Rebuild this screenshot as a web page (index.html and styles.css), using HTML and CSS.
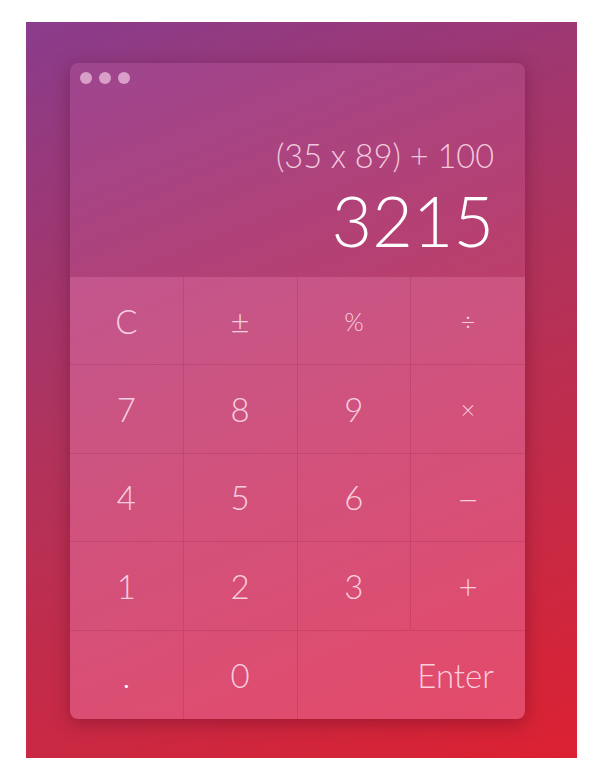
FILE: index.html
```html
<!DOCTYPE html>
<html>
<head>
<meta charset="utf-8">
<link rel="stylesheet" href="styles.css">
</head>
<body>
<div class="backdrop">
  <div class="calc">
    <div class="display">
      <div class="dots"><span></span><span></span><span></span></div>
      <div class="expr">(35 x 89) + 100</div>
      <div class="result">3215</div>
    </div>
    <div class="keys">
      <div class="key">C</div>
      <div class="key">±</div>
      <div class="key small">%</div>
      <div class="key small">÷</div>
      <div class="key">7</div>
      <div class="key">8</div>
      <div class="key">9</div>
      <div class="key small">×</div>
      <div class="key">4</div>
      <div class="key">5</div>
      <div class="key">6</div>
      <div class="key minus">–</div>
      <div class="key">1</div>
      <div class="key">2</div>
      <div class="key">3</div>
      <div class="key">+</div>
      <div class="key dot">.</div>
      <div class="key">0</div>
      <div class="key enter">Enter</div>
    </div>
  </div>
</div>
</body>
</html>
```
FILE: styles.css
```css
* { box-sizing: border-box; }
html, body { margin: 0; padding: 0; background: #fff; }
body { font-family: Lato, "Open Sans", sans-serif; }

.backdrop {
  margin: 22px 21px 0 26px;
  width: 551px;
  height: 736px;
  padding: 41px 52px 39px 44px;
  background: linear-gradient(158deg, #8a3c8c 0%, #b0335c 45%, #dc2131 100%);
}

.calc {
  width: 455px;
  height: 656px;
  border-radius: 8px;
  overflow: hidden;
  display: flex;
  flex-direction: column;
  box-shadow: 0 4px 18px rgba(70, 0, 30, 0.35);
}

.display {
  height: 214px;
  background: rgba(250, 140, 210, 0.14);
  display: flex;
  flex-direction: column;
  align-items: flex-end;
  padding: 9px 31px 22px 10px;
}

.dots {
  align-self: flex-start;
  display: flex;
  gap: 7px;
}
.dots span {
  width: 12px;
  height: 12px;
  border-radius: 50%;
  background: rgba(255, 220, 240, 0.6);
}

.expr {
  margin-top: auto;
  font-weight: 300;
  font-size: 32.5px;
  line-height: 33px;
  color: rgba(255, 225, 240, 0.85);
}

.result {
  margin-top: 13px;
  font-weight: 300;
  font-size: 70px;
  line-height: 70px;
  color: #fff;
}

.keys {
  flex: 1;
  display: grid;
  grid-template-columns: repeat(4, 1fr);
  grid-template-rows: repeat(5, 1fr);
  background: rgba(255, 150, 205, 0.34);
}

.key {
  display: flex;
  align-items: center;
  justify-content: center;
  font-weight: 300;
  font-size: 33px;
  color: rgba(255, 230, 242, 0.85);
  border-right: 1px solid rgba(120, 10, 50, 0.16);
  border-bottom: 1px solid rgba(120, 10, 50, 0.16);
}
.key:nth-child(4n) { border-right: none; }
.key:nth-child(n+17) { border-bottom: none; }
.key.small { font-size: 25px; }
.key.minus { font-size: 40px; }
.key.dot { color: #fff; }
.key.enter {
  grid-column: span 2;
  justify-content: flex-end;
  padding-right: 31px;
  border-right: none;
}
```
